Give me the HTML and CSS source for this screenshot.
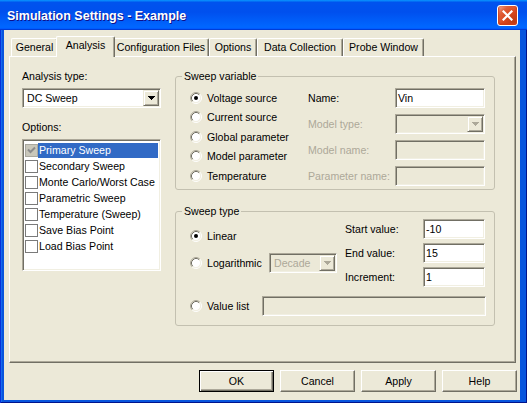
FILE: index.html
```html
<!DOCTYPE html>
<html>
<head>
<meta charset="utf-8">
<link rel="stylesheet" href="styles.css">
</head>
<body>
<svg class="defs" width="0" height="0">
  <defs>
    <symbol id="radio" viewBox="0 0 12 12">
      <circle cx="6" cy="6" r="4.5" fill="#fff"/>
      <path d="M2.11 9.89 A5.5 5.5 0 0 1 9.89 2.11" fill="none" stroke="#ACA899"/>
      <path d="M2.82 9.18 A4.5 4.5 0 0 1 9.18 2.82" fill="none" stroke="#716F64"/>
      <path d="M9.89 2.11 A5.5 5.5 0 0 1 2.11 9.89" fill="none" stroke="#FFFFFF"/>
      <path d="M9.18 2.82 A4.5 4.5 0 0 1 2.82 9.18" fill="none" stroke="#F1EFE2"/>
    </symbol>
    <symbol id="arrow" viewBox="0 0 7 4">
      <path d="M0 0h7v1h-1v1h-1v1h-1v1h-1v-1h-1v-1h-1v-1h-1z"/>
    </symbol>
  </defs>
</svg>
<div class="window">
  <div class="titlebar">
    <span class="title">Simulation Settings - Example</span>
    <span class="close">
      <svg width="11" height="11" viewBox="0 0 11 11"><path d="M1.5 1.5 L9.5 9.5 M9.5 1.5 L1.5 9.5" stroke="#fff" stroke-width="2.2" stroke-linecap="square"/></svg>
    </span>
  </div>
  <div class="client">
    <div class="tabs">
      <div class="tab t1">General</div>
      <div class="tab t2 active">Analysis</div>
      <div class="tab t3">Configuration Files</div>
      <div class="tab t4">Options</div>
      <div class="tab t5">Data Collection</div>
      <div class="tab t6">Probe Window</div>
    </div>
    <div class="panel">
      <div class="left">
        <div class="lbl">Analysis type:</div>
        <div class="combo type-combo">
          <span class="combo-text">DC Sweep</span>
          <span class="drop"><svg class="arr" width="7" height="4"><use href="#arrow"/></svg></span>
        </div>
        <div class="lbl lbl-options">Options:</div>
        <div class="listbox">
          <div class="item"><span class="cb cb-dis"><svg width="9" height="9" viewBox="0 0 9 9"><path d="M1 3.5 L3.5 6 L8 1.5" fill="none" stroke="#8C8C8C" stroke-width="2"/></svg></span><span class="item-text sel">Primary Sweep</span></div>
          <div class="item"><span class="cb"></span><span class="item-text">Secondary Sweep</span></div>
          <div class="item"><span class="cb"></span><span class="item-text">Monte Carlo/Worst Case</span></div>
          <div class="item"><span class="cb"></span><span class="item-text">Parametric Sweep</span></div>
          <div class="item"><span class="cb"></span><span class="item-text">Temperature (Sweep)</span></div>
          <div class="item"><span class="cb"></span><span class="item-text">Save Bias Point</span></div>
          <div class="item"><span class="cb"></span><span class="item-text">Load Bias Point</span></div>
        </div>
      </div>
      <div class="right">
        <fieldset class="group g-var">
          <legend>Sweep variable</legend>
          <div class="var-grid">
            <div class="radios">
              <div class="radio-row"><svg class="radio" width="12" height="12"><use href="#radio"/><circle cx="6" cy="6" r="2" fill="#000"/></svg>Voltage source</div>
              <div class="radio-row"><svg class="radio" width="12" height="12"><use href="#radio"/></svg>Current source</div>
              <div class="radio-row"><svg class="radio" width="12" height="12"><use href="#radio"/></svg>Global parameter</div>
              <div class="radio-row"><svg class="radio" width="12" height="12"><use href="#radio"/></svg>Model parameter</div>
              <div class="radio-row"><svg class="radio" width="12" height="12"><use href="#radio"/></svg>Temperature</div>
            </div>
            <div class="fields">
              <div class="flbl">Name:</div>
              <div class="field">Vin</div>
              <div class="flbl dis-text">Model type:</div>
              <div class="combo dis"><span class="combo-text"></span><span class="drop"><svg class="arr" width="7" height="4"><use href="#arrow"/></svg></span></div>
              <div class="flbl dis-text">Model name:</div>
              <div class="field dis"></div>
              <div class="flbl dis-text">Parameter name:</div>
              <div class="field dis"></div>
            </div>
          </div>
        </fieldset>
        <fieldset class="group g-type">
          <legend>Sweep type</legend>
          <div class="type-grid">
            <div class="type-left">
              <div class="radio-row"><svg class="radio" width="12" height="12"><use href="#radio"/><circle cx="6" cy="6" r="2" fill="#000"/></svg>Linear</div>
              <div class="radio-row log-row"><svg class="radio" width="12" height="12"><use href="#radio"/></svg>Logarithmic
                <div class="combo dis decade"><span class="combo-text dis-text">Decade</span><span class="drop"><svg class="arr" width="7" height="4"><use href="#arrow"/></svg></span></div>
              </div>
            </div>
            <div class="flbl">Start value:</div>
            <div class="field">-10</div>
            <div class="flbl">End value:</div>
            <div class="field">15</div>
            <div class="flbl">Increment:</div>
            <div class="field">1</div>
          </div>
          <div class="radio-row value-row"><svg class="radio" width="12" height="12"><use href="#radio"/></svg>Value list<div class="field dis vlist"></div></div>
        </fieldset>
      </div>
    </div>
    <div class="buttons">
      <div class="btn default">OK</div>
      <div class="btn">Cancel</div>
      <div class="btn">Apply</div>
      <div class="btn">Help</div>
    </div>
  </div>
</div>
</body>
</html>
```

FILE: styles.css
```css
html, body {
  margin: 0;
  padding: 0;
}
body {
  font-family: "Liberation Sans", Arial, sans-serif;
  font-size: 10.6px;
  color: #000;
  background: #fff;
}
.defs {
  position: absolute;
  width: 0;
  height: 0;
}
.window {
  width: 527px;
  height: 403px;
  display: flex;
  flex-direction: column;
  background: #0855DD;
  box-shadow: inset 1px 0 #0831D9, inset -1px -1px #00138C, inset 2px 0 #166AEE;
}
.titlebar {
  height: 30px;
  flex: none;
  display: flex;
  align-items: center;
  justify-content: space-between;
  padding: 0 9px 0 7px;
  background: linear-gradient(180deg, #0997FF, #0053EE 8%, #0050EE 40%, #0066FF 88%, #0066FF 93%, #005BFF 95%, #003DD7 96%, #003DD7);
}
.title {
  color: #fff;
  font-weight: bold;
  font-size: 12.5px;
  text-shadow: 1px 1px #0F1089;
  margin-top: 1px;
}
.close {
  width: 21px;
  height: 21px;
  box-sizing: border-box;
  border: 1px solid #fff;
  border-radius: 3px;
  background: radial-gradient(circle at 85% 85%, #B83A14 0%, #D9481F 45%, #E0603A 70%, #F2A48C 92%, #fff 100%);
  box-shadow: inset 0 -1px 2px 1px #CF3E17;
  display: flex;
  align-items: center;
  justify-content: center;
  margin-top: 1px;
}
.client {
  flex: 1;
  margin: 0 7px 3px 4px;
  background: #ECE9D8;
  padding: 6px 3px 0 5px;
  display: flex;
  flex-direction: column;
}
/* tabs */
.tabs {
  display: flex;
  align-items: flex-end;
  height: 20px;
  padding-left: 2px;
  position: relative;
  z-index: 1;
}
.tab {
  height: 18px;
  box-sizing: border-box;
  border-top: 1px solid #fff;
  border-left: 1px solid #fff;
  border-right: 1px solid #716F64;
  box-shadow: inset -1px 0 #ACA899;
  border-radius: 2px 2px 0 0;
  text-align: center;
  line-height: 16px;
  background: #ECE9D8;
  white-space: nowrap;
}
.t1 { width: 47px; }
.t2 { width: 55px; }
.t3 { width: 96px; }
.t4 { width: 48px; }
.t5 { width: 86px; }
.t6 { width: 81px; }
.tab.active {
  width: 59px;
  height: 21px;
  margin: 0 -2px -1px;
  position: relative;
  z-index: 2;
  line-height: 16px;
}
/* panel */
.panel {
  height: 307px;
  box-sizing: border-box;
  margin-right: 1px;
  border: 1px solid;
  border-color: #fff #716F64 #716F64 #fff;
  box-shadow: inset -1px -1px #ACA899;
  padding: 13px 0 0 12px;
  display: grid;
  grid-template-columns: 139px 320px;
  column-gap: 14px;
  align-items: start;
}
.lbl {
  line-height: 13px;
  height: 13px;
}
.lbl-options {
  margin-top: 13px;
}
.combo {
  height: 20px;
  box-sizing: border-box;
  border: 1px solid;
  border-color: #ACA899 #fff #fff #ACA899;
  box-shadow: inset 1px 1px #716F64, inset -1px -1px #F1EFE2;
  background: #fff;
  padding: 1px;
  display: flex;
  align-items: center;
}
.type-combo {
  margin-top: 5px;
  width: 139px;
}
.combo.dis {
  background: #ECE9D8;
}
.combo-text {
  flex: 1;
  padding-left: 3px;
  line-height: 16px;
  white-space: nowrap;
  overflow: hidden;
}
.drop {
  width: 16px;
  height: 16px;
  flex: none;
  box-sizing: border-box;
  border: 1px solid;
  border-color: #ECE9D8 #716F64 #716F64 #ECE9D8;
  box-shadow: inset 1px 1px #fff, inset -1px -1px #ACA899;
  background: #ECE9D8;
  display: flex;
  align-items: center;
  justify-content: center;
}
.arr {
  fill: #000;
}
.combo.dis .arr {
  fill: #ACA899;
}
.listbox {
  margin-top: 5px;
  height: 132px;
  box-sizing: border-box;
  border: 1px solid;
  border-color: #ACA899 #fff #fff #ACA899;
  box-shadow: inset 1px 1px #716F64, inset -1px -1px #F1EFE2;
  background: #fff;
  padding: 2px 2px 0 2px;
}
.item {
  height: 16px;
  display: flex;
  align-items: center;
}
.cb {
  width: 13px;
  height: 13px;
  box-sizing: border-box;
  border: 1px solid #7A7A7A;
  background: #fff;
  flex: none;
  display: flex;
  align-items: center;
  justify-content: center;
}
.cb-dis {
  background: #C9C7BA;
  border-color: #A9A89F;
}
.item-text {
  flex: 1;
  height: 15px;
  line-height: 15px;
  padding-left: 1px;
  white-space: nowrap;
}
.item-text.sel {
  background: #316AC5;
  color: #fff;
}
/* group boxes */
.group {
  margin: 0;
  min-inline-size: 0;
  box-sizing: border-box;
  width: 320px;
  border: 1px solid #C3C0B0;
  border-radius: 3px;
  padding: 5px 8px 3px 6px;
}
.group legend {
  padding: 0 2px;
  line-height: 13px;
  margin-left: 0;
}
.g-type {
  margin-top: 15px;
  padding: 1px 8px 9px 6px;
}
.var-grid {
  margin-left: 8px;
  display: grid;
  grid-template-columns: 118px 177px;
}
.radios {
  display: grid;
  grid-template-rows: repeat(5, 19.5px);
}
.radio-row {
  display: flex;
  align-items: center;
  white-space: nowrap;
}
.radio {
  flex: none;
  margin-right: 5px;
}
.fields {
  display: grid;
  grid-template-columns: 87px 90px;
  grid-template-rows: repeat(4, 20px);
  row-gap: 6px;
  align-items: center;
}
.flbl {
  white-space: nowrap;
}
.dis-text {
  color: #ACA899;
}
.field {
  height: 20px;
  box-sizing: border-box;
  border: 1px solid;
  border-color: #ACA899 #fff #fff #ACA899;
  box-shadow: inset 1px 1px #716F64, inset -1px -1px #F1EFE2;
  background: #fff;
  padding: 0 2px;
  line-height: 18px;
  white-space: nowrap;
}
.field.dis {
  background: #ECE9D8;
}
.type-grid {
  margin-left: 8px;
  display: grid;
  grid-template-columns: 155px 78px 62px;
  grid-template-rows: repeat(3, 20px);
  row-gap: 4px;
  align-items: center;
}
.type-left {
  grid-column: 1;
  grid-row: 1 / 4;
  align-self: start;
  padding-top: 7px;
  display: flex;
  flex-direction: column;
  gap: 7px;
}
.type-left .radio-row {
  height: 20px;
}
.log-row {
  width: 147px;
}
.decade {
  margin-left: auto;
  width: 68px;
}
.value-row {
  margin-left: 8px;
  margin-top: 9px;
  height: 20px;
}
.vlist {
  margin-left: auto;
  width: 224px;
}
/* buttons */
.buttons {
  display: flex;
  justify-content: flex-end;
  gap: 6px;
  margin-top: 7px;
}
.btn {
  width: 75px;
  height: 22px;
  box-sizing: border-box;
  border: 1px solid;
  border-color: #fff #716F64 #716F64 #fff;
  box-shadow: inset -1px -1px #ACA899;
  display: flex;
  align-items: center;
  justify-content: center;
}
.btn.default {
  border: 1px solid #000;
  box-shadow: inset 1px 1px #fff, inset -1px -1px #716F64, inset -2px -2px #ACA899;
}
```
